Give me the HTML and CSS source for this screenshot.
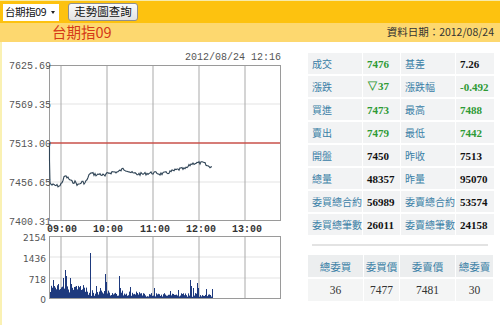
FILE: index.html
```html
<!DOCTYPE html>
<html lang="zh-Hant">
<head>
<meta charset="utf-8">
<title>台期指09</title>
<link rel="stylesheet" href="styles.css">
</head>
<body>
<div class="topbar">
  <div class="select"><span class="opt">台期指09</span><span class="caret"></span></div>
  <button class="btn" type="button">走勢圖查詢</button>
</div>
<div class="subbar">
  <span class="title">台期指09</span>
  <span class="date">資料日期：2012/08/24</span>
</div>
<div class="main">
  <svg class="chart" width="298" height="283" viewBox="2 42 298 283" xmlns="http://www.w3.org/2000/svg">
    <text class="stamp" x="281" y="60" text-anchor="end">2012/08/24 12:16</text>
    <g class="grid-h">
      <line x1="49" y1="104" x2="280" y2="104"/>
      <line x1="49" y1="182" x2="280" y2="182"/>
    </g>
    <g class="grid-v">
      <line x1="61" y1="65" x2="61" y2="221"/>
      <line x1="107" y1="65" x2="107" y2="221"/>
      <line x1="153" y1="65" x2="153" y2="221"/>
      <line x1="199" y1="65" x2="199" y2="221"/>
      <line x1="245" y1="65" x2="245" y2="221"/>
    </g>
    <rect class="frame" x="49.5" y="65.5" width="231" height="155"/>
    <line class="ref" x1="49" y1="143" x2="280" y2="143"/>
    <path id="price" class="price" d=""/>
    <g class="plabel">
      <text x="51" y="69" text-anchor="end">7625.69</text>
      <text x="51" y="108" text-anchor="end">7569.35</text>
      <text x="51" y="147" text-anchor="end">7513.00</text>
      <text x="51" y="186" text-anchor="end">7456.65</text>
      <text x="51" y="225" text-anchor="end">7400.31</text>
    </g>
    <g class="tlabel">
      <text x="62" y="232" text-anchor="middle">09:00</text>
      <text x="108" y="232" text-anchor="middle">10:00</text>
      <text x="155" y="232" text-anchor="middle">11:00</text>
      <text x="201" y="232" text-anchor="middle">12:00</text>
      <text x="247" y="232" text-anchor="middle">13:00</text>
    </g>
    <g class="grid-h">
      <line x1="49" y1="257" x2="280" y2="257"/>
      <line x1="49" y1="278" x2="280" y2="278"/>
    </g>
    <g class="grid-v">
      <line x1="61" y1="236" x2="61" y2="298"/>
      <line x1="107" y1="236" x2="107" y2="298"/>
      <line x1="153" y1="236" x2="153" y2="298"/>
      <line x1="199" y1="236" x2="199" y2="298"/>
      <line x1="245" y1="236" x2="245" y2="298"/>
    </g>
    <path id="vol" class="vol" d=""/>
    <rect class="frame" x="49.5" y="236.5" width="231" height="62"/>
    <g class="vlabel">
      <text x="46" y="241" text-anchor="end">2154</text>
      <text x="46" y="262" text-anchor="end">1436</text>
      <text x="46" y="283" text-anchor="end">718</text>
      <text x="46" y="303" text-anchor="end">0</text>
    </g>
  </svg>
  <div class="side">
    <table class="quote">
      <tr><th>成交</th><td class="up">7476</td><th>基差</th><td>7.26</td></tr>
      <tr><th>漲跌</th><td class="up">▽37</td><th>漲跌幅</th><td class="up">-0.492</td></tr>
      <tr><th>買進</th><td class="up">7473</td><th>最高</th><td class="up">7488</td></tr>
      <tr><th>賣出</th><td class="up">7479</td><th>最低</th><td class="up">7442</td></tr>
      <tr><th>開盤</th><td>7450</td><th>昨收</th><td>7513</td></tr>
      <tr><th>總量</th><td>48357</td><th>昨量</th><td>95070</td></tr>
      <tr><th>委買總合約</th><td>56989</td><th>委賣總合約</th><td>53574</td></tr>
      <tr><th>委買總筆數</th><td>26011</td><th>委賣總筆數</th><td>24158</td></tr>
    </table>
    <div class="sep"></div>
    <table class="book">
      <tr><th>總委買</th><th>委買價</th><th>委賣價</th><th>總委賣</th></tr>
      <tr><td>36</td><td>7477</td><td>7481</td><td>30</td></tr>
    </table>
  </div>
</div>
<script src="script.js"></script>
</body>
</html>
```
FILE: styles.css
```css
* { box-sizing: border-box; }
html, body { margin: 0; padding: 0; background: #fff; }
body {
  width: 500px; height: 325px; overflow: hidden;
  font-family: "Noto Sans CJK TC", "Liberation Sans", sans-serif;
}
.topbar {
  height: 23px;
  background: #fdc20f;
  border-top: 1px solid #f7ebaa;
  display: flex; align-items: center;
  padding-left: 3px; gap: 9px;
}
.select {
  width: 56px; height: 17px; background: #fff;
  display: flex; align-items: center; justify-content: space-between;
  padding: 0 4px 0 2px;
  white-space: nowrap; overflow: hidden;
  font-size: 10.5px; color: #111; line-height: 1;
}
.opt { letter-spacing: -0.4px; }
.caret {
  flex: none;
  width: 0; height: 0;
  border-left: 2.5px solid transparent; border-right: 2.5px solid transparent;
  border-top: 3px solid #222;
}
.btn {
  width: 70px; height: 18px; margin: 0; padding: 0;
  border: 1px solid #8f8f8f; border-radius: 3px;
  background: linear-gradient(#fbfbfb, #e2e2e2);
  font-family: "Noto Sans CJK TC", sans-serif;
  font-size: 11.5px; color: #111; line-height: 1;
  white-space: nowrap;
}
.subbar {
  height: 19px; background: #fdd86f;
  display: flex; align-items: center; justify-content: space-between;
  padding: 0 6px 0 52px;
}
.title { font-size: 14.5px; color: #d53816; line-height: 1; }
.date { font-size: 10.5px; color: #333; line-height: 1; }
.main {
  display: flex; height: 283px;
  border-left: 2px solid #faf1b3;
}
.chart { display: block; flex: none; }
.stamp { font-family: "Liberation Mono", monospace; font-size: 10px; fill: #555; }
.grid-h line { stroke: #e3e3e3; stroke-width: 1; }
.grid-v line { stroke: #a9a9a9; stroke-width: 1; }
.frame { fill: none; stroke: #9a9a9a; stroke-width: 1; }
.ref { stroke: #c9514a; stroke-width: 1.3; }
.price { fill: none; stroke: #2f4456; stroke-width: 1.1; }
.vol { fill: none; stroke: #1e3a7e; stroke-width: 1; }
.plabel text { font-family: "Liberation Mono", monospace; font-size: 10px; fill: #555; }
.tlabel text { font-family: "Liberation Mono", monospace; font-size: 10px; fill: #333; font-weight: bold; }
.vlabel text { font-family: "DejaVu Sans", sans-serif; font-size: 9px; fill: #555; }
.side { padding: 9px 0 0 8px; width: 198px; }
table { border-collapse: separate; border-spacing: 1px 2px; margin-left: -1px; }
.quote th, .quote td { height: 21px; padding: 0 0 0 4px; background: #f2f3f4; text-align: left; white-space: nowrap; }
.quote th { font-weight: normal; font-size: 10px; color: #3a80a6; }
.quote th:nth-child(1) { width: 54px; }
.quote td:nth-child(2) { width: 37px; }
.quote th:nth-child(3) { width: 54px; }
.quote td:nth-child(4) { width: 38px; }
.quote td { font-family: "Liberation Serif", serif; font-weight: bold; font-size: 11px; color: #111; }
.quote td.up { color: #2e9a35; }
.sep { height: 2px; background: #e3e3e3; margin: 7px 4px 7px 4px; width: 176px; }
.book th, .book td { height: 22px; text-align: center; padding: 0; }
.book th { background: #eceeef; font-weight: normal; font-size: 10.5px; color: #3a80a6; }
.book td { background: #f4f5f5; font-family: "Liberation Serif", serif; font-size: 11.5px; color: #333; }
.book th:nth-child(1) { width: 55px; }
.book th:nth-child(2) { width: 35px; }
.book th:nth-child(3) { width: 55px; }
.book th:nth-child(4) { width: 37px; }
```
FILE: script.js
```js
(function () {
  var seed = 7;
  function rnd() { seed = (seed * 9301 + 49297) % 233280; return seed / 233280; }
  var kp = [[50,183],[52,185],[60,186],[65,176],[68,178],[72,182],[75,182],[78,185],[82,182],[85,183],[88,178],[90,173],[97,175],[100,174],[105,176],[108,173],[113,172],[118,172],[123,169],[127,170],[132,173],[137,174],[143,174],[150,173],[157,173],[160,174],[167,173],[173,171],[180,169],[185,169],[188,167],[191,164],[195,163],[200,163],[204,163],[207,166],[212,167]];
  function interp(x) {
    for (var i = 0; i < kp.length - 1; i++) {
      if (x >= kp[i][0] && x <= kp[i+1][0]) {
        var t = (x - kp[i][0]) / (kp[i+1][0] - kp[i][0]);
        return kp[i][1] + t * (kp[i+1][1] - kp[i][1]);
      }
    }
    return kp[kp.length-1][1];
  }
  var d = "M49.5,143 L49.5,160 L50,183";
  for (var x = 51; x <= 212; x += 1) {
    var n = (rnd() - 0.5) * 3;
    d += " L" + x + "," + (interp(x) + n).toFixed(1);
  }
  document.getElementById("price").setAttribute("d", d);

  var spikes = {53:18,54:12,58:14,63:20,65:28,66:22,70:20,71:14,76:12,80:12,90:45,96:12,100:10,105:24,106:16,119:22,120:10,130:11,154:10,170:7,178:8,190:18,191:12,193:10,197:15,198:10,206:9,212:9};
  var v = "";
  for (var xb = 50; xb <= 212; xb++) {
    var h;
    if (xb < 88) h = 5 + rnd() * 8;
    else if (xb < 140) h = 2 + rnd() * 6;
    else h = 1 + rnd() * 4;
    if (spikes[xb]) h = spikes[xb];
    v += "M" + (xb + 0.5) + ",298 V" + (298 - h).toFixed(1) + " ";
  }
  document.getElementById("vol").setAttribute("d", v);
})();
```
